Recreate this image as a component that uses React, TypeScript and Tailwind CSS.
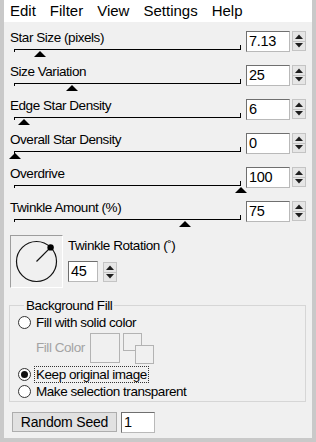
import React from "react";

const font = { fontFamily: '"Liberation Sans", Arial, sans-serif' };

function Spinner() {
  return (
    <div className="flex flex-col w-[14px] h-[20px] border border-[#c4c4c4] bg-[#e6e6e6]">
      <div className="flex-1 flex items-center justify-center border-b border-[#c4c4c4]">
        <svg width="8" height="5" viewBox="0 0 8 5">
          <polygon points="0,5 4,0.5 8,5" fill="#1e1e1e" />
        </svg>
      </div>
      <div className="flex-1 flex items-center justify-center">
        <svg width="8" height="5" viewBox="0 0 8 5">
          <polygon points="0,0 4,4.5 8,0" fill="#1e1e1e" />
        </svg>
      </div>
    </div>
  );
}

function NumBox({ value, w }: { value: string; w: string }) {
  return (
    <div
      className={`${w} h-[21px] bg-white border border-t-[#6f6f6f] border-l-[#6f6f6f] border-r-[#b9b9b9] border-b-[#b9b9b9] pl-[2px] text-[14.5px] leading-[19px] tracking-[-0.3px] text-black`}
    >
      {value}
    </div>
  );
}

const rows = [
  { label: "Star Size (pixels)", value: "7.13", thumb: 25 },
  { label: "Size Variation", value: "25", thumb: 57 },
  { label: "Edge Star Density", value: "6", thumb: 9 },
  { label: "Overall Star Density", value: "0", thumb: 0 },
  { label: "Overdrive", value: "100", thumb: 226 },
  { label: "Twinkle Amount (%)", value: "75", thumb: 170 },
];

const labelCls = "text-[13.5px] leading-[15px] tracking-[-0.45px] text-black whitespace-nowrap";

function SliderRow({ label, value, thumb }: { label: string; value: string; thumb: number }) {
  return (
    <div className="flex h-[34px]">
      <div className="w-[242px] flex flex-col">
        <div className={`pl-[6px] h-[15px] ${labelCls}`}>{label}</div>
        <div className="relative ml-[10px] w-[227px] h-[19px]">
          <div className="absolute left-0 top-[4px] w-[227px] h-[1px] bg-black" />
          <div className="absolute left-0 top-[4px] w-[1px] h-[3px] bg-black" />
          <div className="absolute right-0 top-[0px] w-[1px] h-[5px] bg-black" />
          <svg
            className="absolute top-[6px]"
            style={{ left: thumb - 5.5 }}
            width="12"
            height="6"
            viewBox="0 0 12 6"
          >
            <polygon points="0,6 6,0 12,6" fill="#000" />
          </svg>
        </div>
      </div>
      <div className="pt-[1px] flex gap-[2px] items-start">
        <NumBox value={value} w="w-[44px]" />
        <Spinner />
      </div>
    </div>
  );
}

function Radio({ checked, label, focus }: { checked?: boolean; label: string; focus?: boolean }) {
  return (
    <div className="flex items-center h-[17px]">
      <div className="w-[13px] h-[13px] rounded-full border border-[#333] bg-white flex items-center justify-center">
        {checked && <div className="w-[7px] h-[7px] rounded-full bg-[#111]" />}
      </div>
      <div
        className={`ml-[4px] px-[1px] ${labelCls} ${
          focus ? "outline outline-1 outline-dotted outline-[#333]" : ""
        }`}
      >
        {label}
      </div>
    </div>
  );
}

export default function App() {
  return (
    <div className="w-[316px] h-[442px] bg-[#c9c9c9] px-[4px] pb-[4px] flex flex-col" style={font}>
      <div className="h-[22px] bg-white flex items-center pl-[6px] gap-[14px] text-[15px] text-black shrink-0">
        <span>Edit</span>
        <span>Filter</span>
        <span>View</span>
        <span>Settings</span>
        <span>Help</span>
      </div>
      <div className="flex-1 bg-[#f0f0f0] pt-[8px] flex flex-col">
        {rows.map((r) => (
          <SliderRow key={r.label} {...r} />
        ))}
        <div className="flex mt-[1px] ml-[6px]">
          <div className="w-[53px] h-[53px] border border-t-[#9d9d9d] border-l-[#9d9d9d] border-r-[#ffffff] border-b-[#ffffff]">
            <svg width="51" height="51" viewBox="0 0 51 51">
              <circle cx="25.5" cy="25.5" r="20" fill="none" stroke="#111" strokeWidth="1.2" />
              <line x1="25.5" y1="25.5" x2="39.6" y2="11.4" stroke="#111" strokeWidth="1.2" />
              <circle cx="39.6" cy="11.4" r="3.2" fill="#000" />
            </svg>
          </div>
          <div className="ml-[5px] flex flex-col">
            <div className={`mt-[3px] ${labelCls}`}>Twinkle Rotation (˚)</div>
            <div className="mt-[8px] flex items-start gap-[5px]">
              <NumBox value="45" w="w-[30px]" />
              <div className="mt-[1px]">
                <Spinner />
              </div>
            </div>
          </div>
        </div>
        <fieldset className="ml-[5px] w-[297px] h-[104px] mt-[10px] border border-[#d6d6d6] pl-[8px]">
          <legend className={`ml-[6px] px-[2px] ${labelCls}`}>Background Fill</legend>
          <div className="flex flex-col mt-[1px]">
            <Radio label="Fill with solid color" />
            <div className="flex items-center h-[32px] mt-[1px]">
              <div className="ml-[18px] text-[13.5px] tracking-[-0.45px] text-[#a3a3a3]">Fill Color</div>
              <div className="ml-[5px] w-[30px] h-[30px] border border-[#b3b3b3]" />
              <svg className="ml-[3px]" width="31" height="31" viewBox="0 0 31 31">
                <rect x="0.5" y="0.5" width="18" height="17" fill="none" stroke="#b3b3b3" />
                <rect x="12.5" y="12.5" width="18" height="18" fill="#f0f0f0" stroke="#b3b3b3" />
              </svg>
            </div>
            <div className="mt-[2px]">
              <Radio checked focus label="Keep original image" />
            </div>
            <Radio label="Make selection transparent" />
          </div>
        </fieldset>
        <div className="flex ml-[8px] mt-[10px] gap-[4px]">
          <div className="w-[105px] h-[20px] bg-[#e1e1e1] border border-[#adadad] flex items-center justify-center text-[14px] tracking-[-0.2px] text-black">
            Random Seed
          </div>
          <NumBox value="1" w="w-[34px]" />
        </div>
      </div>
    </div>
  );
}
